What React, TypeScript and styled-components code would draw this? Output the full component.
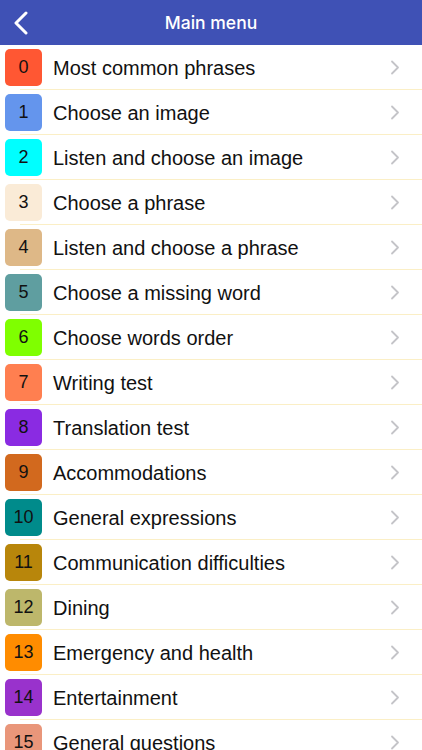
import React from "react";
import styled, { createGlobalStyle } from "styled-components";

const Global = createGlobalStyle`
  html, body { margin: 0; padding: 0; background: #ffffff; }
  body { font-family: "Liberation Sans", Arial, sans-serif; overflow: hidden; }
`;

const Page = styled.div`
  width: 422px;
  height: 750px;
  overflow: hidden;
  background: #ffffff;
`;

const Header = styled.header`
  height: 45px;
  background: #3f51b5;
  display: flex;
  align-items: center;
  justify-content: center;
  position: relative;
`;

const BackButton = styled.button`
  position: absolute;
  left: 8px;
  top: 8px;
  width: 26px;
  height: 30px;
  padding: 0;
  border: none;
  background: transparent;
  display: flex;
  align-items: center;
  justify-content: center;
`;

const Title = styled.h1`
  margin: 0;
  color: #ffffff;
  font-size: 17.5px;
  font-weight: 500;
  font-family: Inter, "Liberation Sans", Arial, sans-serif;
`;

const List = styled.ul`
  list-style: none;
  margin: 0;
  padding: 0;
`;

const Row = styled.li`
  height: 45px;
  display: flex;
  align-items: center;
  position: relative;
  &::after {
    content: "";
    position: absolute;
    left: 20px;
    right: 0;
    bottom: 0;
    height: 1px;
    background: #fbefc6;
  }
`;

const Badge = styled.div<{ $bg: string }>`
  width: 37px;
  height: 37px;
  margin-left: 5px;
  border-radius: 5px;
  background: ${(p) => p.$bg};
  display: flex;
  align-items: center;
  justify-content: center;
  font-size: 18px;
  color: #111111;
  flex-shrink: 0;
`;

const Label = styled.span`
  flex: 1;
  margin-left: 11px;
  padding-top: 2px;
  font-size: 20px;
  color: #111111;
  white-space: nowrap;
`;

const Chevron = styled.svg`
  width: 10px;
  height: 15px;
  margin-right: 22px;
  flex-shrink: 0;
`;

const items: [string, string][] = [
  ["#ff5733", "Most common phrases"],
  ["#6495ed", "Choose an image"],
  ["#00ffff", "Listen and choose an image"],
  ["#faebd7", "Choose a phrase"],
  ["#deb887", "Listen and choose a phrase"],
  ["#5f9ea0", "Choose a missing word"],
  ["#7fff00", "Choose words order"],
  ["#ff7f50", "Writing test"],
  ["#8a2be2", "Translation test"],
  ["#d2691e", "Accommodations"],
  ["#008b8b", "General expressions"],
  ["#b8860b", "Communication difficulties"],
  ["#bdb76b", "Dining"],
  ["#ff8c00", "Emergency and health"],
  ["#9932cc", "Entertainment"],
  ["#e9967a", "General questions"],
];

export default function App() {
  return (
    <Page>
      <Global />
      <Header>
        <BackButton aria-label="Back">
          <svg width="14" height="24" viewBox="0 0 14 24">
            <path d="M12 2 L2 12 L12 22" fill="none" stroke="#ffffff" strokeWidth="3" strokeLinecap="round" strokeLinejoin="round" />
          </svg>
        </BackButton>
        <Title>Main menu</Title>
      </Header>
      <List>
        {items.map(([c, t], i) => (
          <Row key={i}>
            <Badge $bg={c}>{i}</Badge>
            <Label>{t}</Label>
            <Chevron viewBox="0 0 10 15">
              <path d="M2 1.5 L8 7.5 L2 13.5" fill="none" stroke="#c4c4c8" strokeWidth="1.8" strokeLinecap="round" strokeLinejoin="round" />
            </Chevron>
          </Row>
        ))}
      </List>
    </Page>
  );
}
